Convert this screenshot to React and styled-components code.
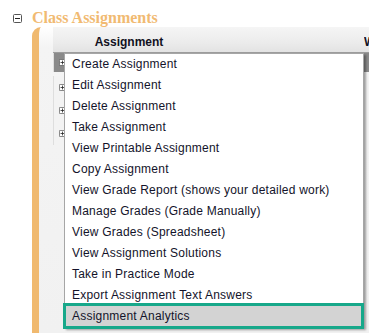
import React from "react";
import styled, { createGlobalStyle } from "styled-components";

const GlobalStyle = createGlobalStyle`
  html, body {
    margin: 0;
    padding: 0;
    background: #ffffff;
    overflow: hidden;
  }
`;

const MENU_ITEMS = [
  "Create Assignment",
  "Edit Assignment",
  "Delete Assignment",
  "Take Assignment",
  "View Printable Assignment",
  "Copy Assignment",
  "View Grade Report (shows your detailed work)",
  "Manage Grades (Grade Manually)",
  "View Grades (Spreadsheet)",
  "View Assignment Solutions",
  "Take in Practice Mode",
  "Export Assignment Text Answers",
  "Assignment Analytics",
];

function BoxIcon({ plus, size }) {
  return (
    <svg width={size} height={size} viewBox="0 0 9 9" style={{ display: "block" }}>
      <rect x="0.5" y="0.5" width="8" height="8" rx="1" fill="#fff" stroke="#555" />
      <line x1="2" y1="4.5" x2="7" y2="4.5" stroke="#222" />
      {plus && <line x1="4.5" y1="2" x2="4.5" y2="7" stroke="#222" />}
    </svg>
  );
}

function App() {
  return (
    <Page>
      <GlobalStyle />
      <TitleRow>
        <BoxIcon size={9} />
        <Title>Class Assignments</Title>
      </TitleRow>
      <Panel>
        <Table>
          <Header>
            <HeadCell $width={152}>Assignment</HeadCell>
            <HeadCell $width={159} />
            <HeadCell $width={5} $left>W</HeadCell>
          </Header>
          <Row $active>
            <BoxIcon plus size={7} />
          </Row>
          <Row>
            <BoxIcon plus size={7} />
          </Row>
          <Row>
            <BoxIcon plus size={7} />
          </Row>
          <Row>
            <BoxIcon plus size={7} />
          </Row>
          <Menu>
            {MENU_ITEMS.map((label, i) => (
              <Item key={label} $selected={i === MENU_ITEMS.length - 1}>
                {label}
              </Item>
            ))}
          </Menu>
        </Table>
      </Panel>
    </Page>
  );
}

const Page = styled.div`
  width: 369px;
  height: 333px;
  padding: 13px 0 0 13px;
  box-sizing: border-box;
  display: flex;
  flex-direction: column;
  overflow: hidden;
`;

const TitleRow = styled.div`
  display: flex;
  align-items: center;
  gap: 10px;
  height: 11px;
`;

const Title = styled.h2`
  margin: 0;
  font-family: "Liberation Serif", "Times New Roman", serif;
  font-weight: bold;
  font-size: 16px;
  line-height: 11px;
  color: #f1ba72;
  transform: translateY(-1px);
`;

const Panel = styled.div`
  flex: 1;
  margin: 3px 0 0 19px;
  border-left: 7px solid #f0b96f;
  border-top-left-radius: 9px;
  background: linear-gradient(180deg, #ffffff 0px, #f4f4f4 20px, #f1f1f1 100%);
  padding-left: 14px;
  overflow: hidden;
`;

const Table = styled.div`
  position: relative;
  width: 420px;
  height: 100%;
`;

const Header = styled.div`
  display: flex;
  height: 25px;
  background: linear-gradient(180deg, #f5f5f5 0%, #ececec 60%, #e3e3e3 100%);
  border-bottom: 1px solid #9c9c9c;
`;

const HeadCell = styled.div`
  width: ${(p) => p.$width}px;
  flex-shrink: 0;
  display: flex;
  align-items: flex-end;
  justify-content: ${(p) => (p.$left ? "flex-start" : "center")};
  padding-bottom: 3px;
  box-sizing: border-box;
  overflow: hidden;
  font-family: "Liberation Sans", Arial, sans-serif;
  font-weight: bold;
  font-size: 12px;
  color: #111122;
`;

const Row = styled.div`
  display: flex;
  align-items: center;
  height: ${(p) => (p.$active ? 19 : 23)}px;
  margin-bottom: ${(p) => (p.$active ? 4 : 0)}px;
  padding-left: 5px;
  background: ${(p) => (p.$active ? "#8a8a8a" : "#f3f3f3")};
  border-left: 1px solid #dedede;
`;

const Menu = styled.ul`
  position: absolute;
  top: 26px;
  left: 11px;
  width: 300px;
  margin: 0;
  padding: 0;
  list-style: none;
  background: #ffffff;
  border: 1px solid #a6a6a6;
  box-shadow: 2px 2px 2px rgba(0, 0, 0, 0.35);
  box-sizing: border-box;
`;

const Item = styled.li`
  position: relative;
  height: 21px;
  line-height: 21px;
  padding-left: 7px;
  font-family: "Liberation Sans", Arial, sans-serif;
  font-size: 12px;
  letter-spacing: 0.22px;
  color: #13132a;
  white-space: nowrap;
  background: ${(p) => (p.$selected ? "#d3d3d3" : "transparent")};

  &::after {
    content: "";
    display: ${(p) => (p.$selected ? "block" : "none")};
    position: absolute;
    top: -3px;
    bottom: -2px;
    left: -2px;
    right: -1px;
    border: 3px solid #17a88a;
  }
`;

export default App;
